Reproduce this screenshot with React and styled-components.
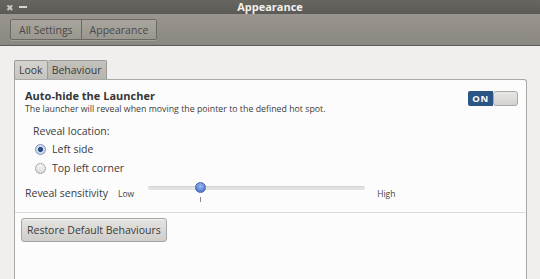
import React from "react";
import styled, { createGlobalStyle } from "styled-components";

const Global = createGlobalStyle`
  html, body { margin: 0; padding: 0; }
  body {
    width: 540px;
    height: 279px;
    overflow: hidden;
    background: #f0efee;
    font-family: "Open Sans", "DejaVu Sans", sans-serif;
    color: #3c3c3c;
  }
`;

export default function App() {
  return (
    <Window>
      <Global />
      <TitleBar>
        <WinControls>
          <span className="close">✖</span>
          <span className="min" />
        </WinControls>
        <h1>Appearance</h1>
      </TitleBar>
      <Toolbar>
        <Crumbs>
          <Crumb>All Settings</Crumb>
          <Crumb>Appearance</Crumb>
        </Crumbs>
      </Toolbar>
      <Body>
        <Tabs>
          <Tab>Look</Tab>
          <Tab active>Behaviour</Tab>
        </Tabs>
        <Panel>
          <Section>
            <HeadRow>
              <div>
                <h2>Auto-hide the Launcher</h2>
                <p>The launcher will reveal when moving the pointer to the defined hot spot.</p>
              </div>
              <Switch>
                <span className="on">ON</span>
                <span className="knob" />
              </Switch>
            </HeadRow>
            <Options>
              <label>Reveal location:</label>
              <Radio checked>
                <i />
                Left side
              </Radio>
              <Radio>
                <i />
                Top left corner
              </Radio>
            </Options>
            <SliderRow>
              <span className="name">Reveal sensitivity</span>
              <small>Low</small>
              <Slider>
                <div className="track" />
                <div className="thumb" style={{ left: "24%" }} />
                <div className="tick" style={{ left: "24%" }} />
              </Slider>
              <small>High</small>
            </SliderRow>
          </Section>
          <Footer>
            <Button>Restore Default Behaviours</Button>
          </Footer>
        </Panel>
      </Body>
    </Window>
  );
}

const Window = styled.div`
  width: 540px;
  height: 279px;
  display: flex;
  flex-direction: column;
`;

const TitleBar = styled.div`
  height: 14px;
  position: relative;
  background: linear-gradient(#67665f, #5b5a56);
  display: flex;
  align-items: center;
  justify-content: center;
  h1 {
    margin: 0;
    font-size: 11px;
    font-weight: 700;
    color: #f2f1ee;
    line-height: 14px;
  }
`;

const WinControls = styled.div`
  position: absolute;
  left: 6px;
  top: 0;
  height: 14px;
  display: flex;
  align-items: center;
  gap: 5px;
  .close {
    font-size: 9px;
    color: #c9c8c3;
    line-height: 1;
  }
  .min {
    width: 8px;
    height: 2px;
    background: #d6d5d0;
  }
`;

const Toolbar = styled.div`
  height: 31px;
  background: linear-gradient(#9a968f, #8a8780);
  border-bottom: 1px solid #5e5c58;
  display: flex;
  align-items: center;
  padding-left: 10px;
`;

const Crumbs = styled.div`
  display: flex;
  border: 1px solid #6a6864;
  border-radius: 2px;
  box-shadow: 0 1px 0 rgba(255, 255, 255, 0.2);
`;

const Crumb = styled.div`
  height: 19px;
  padding: 0 8px;
  display: flex;
  align-items: center;
  font-size: 10.5px;
  color: #4a4946;
  background: linear-gradient(#a8a59e, #9a978f);
  & + & {
    border-left: 1px solid #6a6864;
  }
`;

const Body = styled.div`
  flex: 1;
  padding: 14px 14px 0 14px;
  display: flex;
  flex-direction: column;
  width: 513px;
`;

const Tabs = styled.div`
  display: flex;
  height: 19px;
`;

const Tab = styled.div`
  padding: 0 4px;
  display: flex;
  align-items: center;
  font-size: 10.5px;
  color: #3a3a38;
  border: 1px solid #9c9a95;
  border-bottom: none;
  border-radius: 2px 2px 0 0;
  background: ${(p) =>
    p.active
      ? "linear-gradient(#c4c2bc, #b7b5af)"
      : "linear-gradient(#d5d3ce, #c7c5c0)"};
  & + & {
    border-left: none;
  }
`;

const Panel = styled.div`
  flex: 1;
  background: #fcfcfc;
  border: 1px solid #a9a8a5;
  border-bottom: none;
  border-radius: 0 3px 0 0;
  display: flex;
  flex-direction: column;
`;

const Section = styled.div`
  padding: 8px 8px 0 10px;
  border-bottom: 1px solid #dddcda;
  height: 133px;
  box-sizing: border-box;
`;

const HeadRow = styled.div`
  display: flex;
  justify-content: space-between;
  align-items: flex-start;
  h2 {
    margin: 0;
    font-size: 11px;
    font-weight: 700;
    color: #363636;
    line-height: 15px;
  }
  p {
    margin: 0;
    font-size: 8.8px;
    color: #3d3d3d;
    line-height: 13px;
  }
`;

const Switch = styled.div`
  margin-top: 3px;
  display: flex;
  height: 15px;
  .on {
    width: 25px;
    background: #2a5584;
    color: #fff;
    font-size: 9.5px;
    font-weight: 700;
    display: flex;
    align-items: center;
    justify-content: center;
    border-radius: 2px 0 0 2px;
    letter-spacing: 0.5px;
  }
  .knob {
    width: 25px;
    border: 1px solid #a9a8a4;
    border-radius: 3px;
    background: linear-gradient(#e8e7e5, #d2d1ce);
    box-sizing: border-box;
  }
`;

const Options = styled.div`
  margin-top: 8px;
  padding-left: 8px;
  display: flex;
  flex-direction: column;
  gap: 3px;
  font-size: 10.5px;
  color: #3b3b3b;
  label {
    line-height: 14px;
  }
`;

const Radio = styled.div`
  display: flex;
  align-items: center;
  gap: 6px;
  line-height: 16px;
  i {
    width: 9px;
    height: 9px;
    border-radius: 50%;
    border: 1px solid #a5a4a1;
    background: ${(p) =>
      p.checked
        ? "radial-gradient(circle, #2c4f86 0 2.2px, #c9d6ea 2.8px, #e2e7ef 100%)"
        : "linear-gradient(#f6f6f5, #dcdbd8)"};
    border-color: ${(p) => (p.checked ? "#7f93b5" : "#a5a4a1")};
    margin-left: 2px;
  }
`;

const SliderRow = styled.div`
  margin-top: 4px;
  display: flex;
  align-items: center;
  font-size: 10.5px;
  color: #3b3b3b;
  .name {
    width: 93px;
  }
  small {
    font-size: 8.5px;
    color: #444;
  }
`;

const Slider = styled.div`
  position: relative;
  width: 217px;
  height: 26px;
  margin: 0 12px 0 14px;
  .track {
    position: absolute;
    left: 0;
    right: 0;
    top: 6px;
    height: 3px;
    border-radius: 2px;
    background: #e3e2e0;
    border-top: 1px solid #d4d3d0;
  }
  .thumb {
    position: absolute;
    top: 2px;
    width: 11px;
    height: 11px;
    margin-left: -5px;
    border-radius: 50%;
    background: radial-gradient(circle at 50% 35%, #9fbcf0, #4f7ad0 75%);
    border: 1px solid #4a69a8;
    box-sizing: border-box;
  }
  .tick {
    position: absolute;
    top: 17px;
    width: 1px;
    height: 5px;
    background: #8a8a8a;
  }
`;

const Footer = styled.div`
  padding: 4px 6px;
`;

const Button = styled.button`
  font-family: inherit;
  font-size: 10.5px;
  color: #3b3b3b;
  height: 24px;
  padding: 0 5px;
  border: 1px solid #a5a4a0;
  border-radius: 3px;
  background: linear-gradient(#e4e3e0, #cfcecb);
  box-shadow: inset 0 1px 0 rgba(255, 255, 255, 0.6);
`;
